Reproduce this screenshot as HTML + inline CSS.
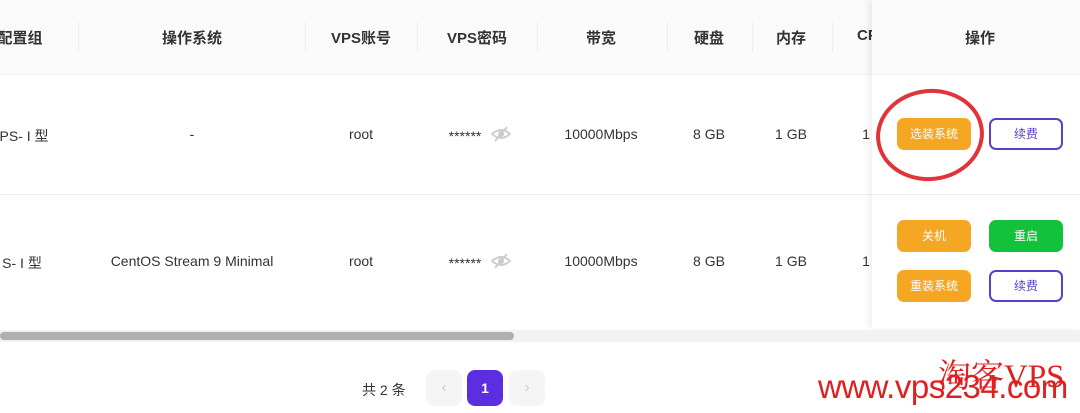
<!DOCTYPE html><html><head><meta charset="utf-8"><style>
body{margin:0;width:1080px;height:413px;overflow:hidden;background:#fff;font-family:"Liberation Sans","Noto Sans CJK SC",sans-serif;color:#333;position:relative}
.a{position:absolute;white-space:nowrap}
.h{font-weight:bold;font-size:15px;color:#333;top:27px;transform:translateX(-50%)}
.c{font-size:14px;color:#333;transform:translateX(-50%)}
.dv{position:absolute;top:22px;width:1px;height:30px;background:#eee}
.btn{position:absolute;width:74px;height:32px;border-radius:7px;font-size:12px;text-align:center;line-height:32px;box-sizing:border-box;color:#fff}
.o{background:#f5a623}.g{background:#13c13a}.p{border:2px solid #5b3fc9;color:#5b3fc9;background:#fff;line-height:28px}
</style></head><body>
<div class="a" style="left:0;top:0;width:1080px;height:74px;background:#fafafa"></div>
<div class="a" style="left:0;top:194px;width:1080px;height:1px;background:#f0f0f0"></div>
<div class="a" style="left:0;top:74px;width:1080px;height:1px;background:#f0f0f0"></div>
<div class="dv" style="left:78px"></div><div class="dv" style="left:305px"></div><div class="dv" style="left:417px"></div><div class="dv" style="left:537px"></div><div class="dv" style="left:667px"></div><div class="dv" style="left:752px"></div><div class="dv" style="left:832px"></div>
<div class="a h" style="left:20px">配置组</div>
<div class="a h" style="left:192px">操作系统</div>
<div class="a h" style="left:361px">VPS账号</div>
<div class="a h" style="left:477px">VPS密码</div>
<div class="a h" style="left:601px">带宽</div>
<div class="a h" style="left:709px">硬盘</div>
<div class="a h" style="left:791px">内存</div>
<div class="a" style="left:857px;top:27px;font-weight:bold;font-size:15px">CPU</div>
<div class="a c" style="left:24px;top:126px">PS- I 型</div>
<div class="a c" style="left:192px;top:126px">-</div>
<div class="a c" style="left:361px;top:126px">root</div>
<div class="a c" style="left:465px;top:128px">******</div>
<svg class="a" style="left:491px;top:125px" width="20" height="18" viewBox="0 0 20 18"><path d="M1 9 Q10 1 19 9 Q10 17 1 9Z" fill="none" stroke="#ccc" stroke-width="1.8"/><circle cx="10" cy="9" r="3" fill="#ccc"/><path d="M4 16 L16 2" stroke="#ccc" stroke-width="1.8"/></svg>
<div class="a c" style="left:601px;top:126px">10000Mbps</div>
<div class="a c" style="left:709px;top:126px">8 GB</div>
<div class="a c" style="left:791px;top:126px">1 GB</div>
<div class="a c" style="left:866px;top:126px">1</div>
<div class="a c" style="left:22px;top:253px">S- I 型</div>
<div class="a c" style="left:192px;top:253px">CentOS Stream 9 Minimal</div>
<div class="a c" style="left:361px;top:253px">root</div>
<div class="a c" style="left:465px;top:255px">******</div>
<svg class="a" style="left:491px;top:252px" width="20" height="18" viewBox="0 0 20 18"><path d="M1 9 Q10 1 19 9 Q10 17 1 9Z" fill="none" stroke="#ccc" stroke-width="1.8"/><circle cx="10" cy="9" r="3" fill="#ccc"/><path d="M4 16 L16 2" stroke="#ccc" stroke-width="1.8"/></svg>
<div class="a c" style="left:601px;top:253px">10000Mbps</div>
<div class="a c" style="left:709px;top:253px">8 GB</div>
<div class="a c" style="left:791px;top:253px">1 GB</div>
<div class="a c" style="left:866px;top:253px">1</div>
<div class="a" style="left:872px;top:0;width:208px;height:328px;background:#fff;box-shadow:-4px 0 6px rgba(0,0,0,0.06)"></div>
<div class="a" style="left:872px;top:0;width:208px;height:74px;background:#fafafa"></div>
<div class="a" style="left:872px;top:74px;width:208px;height:1px;background:#f0f0f0"></div>
<div class="a" style="left:872px;top:194px;width:208px;height:1px;background:#f0f0f0"></div>
<div class="a h" style="left:980px">操作</div>
<div class="btn o" style="left:897px;top:118px">选装系统</div>
<div class="btn p" style="left:989px;top:118px">续费</div>
<div class="btn o" style="left:897px;top:220px">关机</div>
<div class="btn g" style="left:989px;top:220px">重启</div>
<div class="btn o" style="left:897px;top:270px">重装系统</div>
<div class="btn p" style="left:989px;top:270px">续费</div>
<div class="a" style="left:876px;top:89px;width:100px;height:84px;border:4px solid #e0333a;border-radius:50%;transform:rotate(-6deg)"></div>
<div class="a" style="left:0;top:330px;width:1080px;height:12px;background:#f2f2f2"></div>
<div class="a" style="left:0;top:332px;width:514px;height:8px;background:#b0b0b0;border-radius:4px"></div>
<div class="a" style="left:362px;top:380px;font-size:14px">共 2 条</div>
<div class="a" style="left:426px;top:370px;width:36px;height:36px;border-radius:8px;background:#f5f5f5;color:#ccc;text-align:center;line-height:36px">‹</div>
<div class="a" style="left:467px;top:370px;width:36px;height:36px;border-radius:8px;background:#5b2fe0;color:#fff;text-align:center;line-height:36px;font-size:14px;font-weight:bold">1</div>
<div class="a" style="left:509px;top:370px;width:36px;height:36px;border-radius:8px;background:#f5f5f5;color:#ccc;text-align:center;line-height:36px">›</div>
<div class="a" style="left:818px;top:368px;font-size:33px;color:#e02020;letter-spacing:-0.5px">www.vps234.com</div>
<div class="a" style="left:938px;top:350px;font-size:33px;color:#e02020;font-family:'Liberation Serif','Noto Serif CJK SC',serif">淘客VPS</div>
</body></html>
